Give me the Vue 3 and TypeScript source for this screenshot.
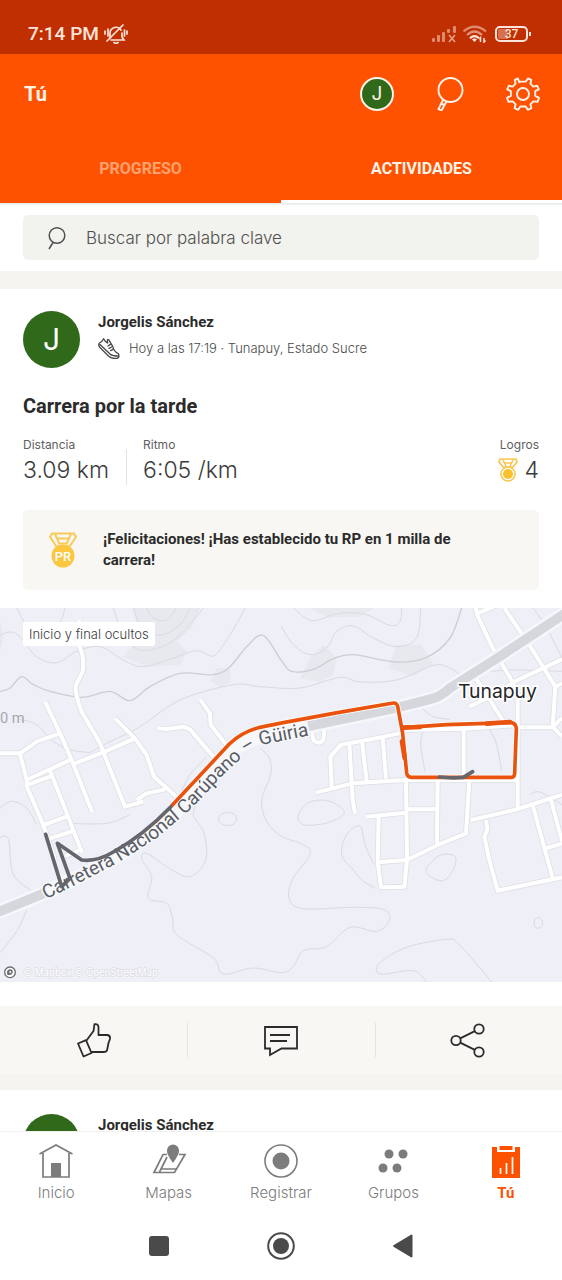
<script setup lang="ts">
type Point = [number, number]

interface NavItem {
  id: string
  label: string
}

const navItems: NavItem[] = [
  { id: 'home', label: 'Inicio' },
  { id: 'maps', label: 'Mapas' },
  { id: 'record', label: 'Registrar' },
  { id: 'groups', label: 'Grupos' },
  { id: 'you', label: 'Tú' },
]

// Turns a list of points into a smooth curve running through all of them.
function smooth(pts: Point[], closed = false): string {
  const n = pts.length
  const at = (i: number): Point =>
    closed ? pts[(i + n) % n] : pts[Math.max(0, Math.min(n - 1, i))]
  let d = `M${pts[0][0]} ${pts[0][1]}`
  const segments = closed ? n : n - 1
  for (let i = 0; i < segments; i++) {
    const [a, b, c, e] = [at(i - 1), at(i), at(i + 1), at(i + 2)]
    d += ` C${b[0] + (c[0] - a[0]) / 6} ${b[1] + (c[1] - a[1]) / 6}`
    d += ` ${c[0] - (e[0] - b[0]) / 6} ${c[1] - (e[1] - b[1]) / 6} ${c[0]} ${c[1]}`
  }
  return closed ? d + 'Z' : d
}

const mainContour = smooth([
  [0, 251], [30, 240], [65, 206], [100, 230], [150, 250], [245, 268], [330, 250], [390, 278],
  [450, 236], [540, 196], [640, 200], [690, 176], [740, 116], [790, 82], [843, 156], [875, 190],
  [940, 184], [1000, 152], [1060, 140], [1190, 162], [1280, 148], [1350, 90], [1385, 0],
])

const contours: string[] = [
  smooth([[0, 82], [30, 72], [60, 86], [110, 146], [170, 164], [230, 130], [300, 116], [370, 156], [430, 176], [520, 150], [590, 128], [640, 144], [680, 96], [720, 30], [735, 0]]),
  smooth([[50, 0], [85, 60], [130, 80], [180, 40], [195, 0]]),
  smooth([[340, 0], [370, 80], [420, 126], [500, 110], [560, 60], [610, 0]]),
  smooth([[400, 0], [425, 60], [480, 82], [540, 50], [570, 0]]),
  smooth([[440, 0], [460, 30], [500, 36], [530, 0]]),
  smooth([[270, 434], [320, 406], [420, 356], [540, 276], [700, 230], [780, 236], [900, 240], [1020, 208], [1080, 222], [1190, 216], [1300, 172], [1350, 180], [1385, 204]]),
  smooth([[843, 54], [880, 110], [930, 140], [980, 120], [1010, 70], [1060, 54], [1120, 90], [1190, 116], [1250, 90], [1262, 0]]),
  smooth([[880, 0], [935, 38], [1000, 20], [1040, 14], [1100, 20], [1170, 52], [1200, 40], [1205, 0]]),
  smooth([[60, 334], [110, 350], [160, 400], [210, 425], [270, 434]]),
  smooth([[595, 576], [580, 620], [610, 670], [620, 740], [600, 785], [560, 806], [500, 776], [440, 736], [425, 752], [455, 806], [445, 870], [500, 886], [518, 930], [530, 980], [640, 1050], [670, 1098], [760, 1080], [843, 1094], [880, 1075], [910, 1028], [980, 1016], [1050, 958], [1130, 970], [1168, 935], [1150, 904], [1060, 898], [910, 902], [867, 870], [880, 810], [930, 740], [910, 710], [843, 684], [800, 640], [785, 576], [812, 500], [808, 450], [780, 420]]),
  smooth([[620, 446], [570, 500], [545, 550]]),
  smooth([[0, 1034], [50, 970], [80, 906]]),
  smooth([[0, 600], [35, 580], [80, 600], [110, 650]]),
  smooth([[0, 688], [25, 694], [40, 800], [95, 848]]),
  smooth([[200, 646], [320, 646], [390, 620]]),
  smooth([[895, 620], [930, 582], [990, 580], [1033, 615], [980, 645], [910, 650]], true),
  smooth([[1125, 840], [1090, 820], [1060, 786], [1025, 740], [1040, 680], [1080, 654], [1095, 710], [1120, 766]]),
  smooth([[1280, 780], [1320, 742], [1365, 745], [1360, 785], [1330, 818], [1290, 805]], true),
  smooth([[1280, 1122], [1240, 1088], [1140, 1098], [1140, 1064], [1220, 1018], [1340, 994], [1380, 1012], [1475, 1122]]),
  smooth([[1270, 366], [1262, 410], [1275, 490]]),
  smooth([[1470, 366], [1490, 410], [1505, 490]]),
  smooth([[1265, 300], [1300, 326], [1350, 334]]),
  smooth([[1600, 0], [1640, 60], [1686, 150]]),
  smooth([[1460, 190], [1560, 186], [1686, 190]]),
  smooth([[1590, 560], [1620, 552], [1686, 590]]),
]

const roads: string[] = [
  'M238 36V116Q254 146 248 191L228 231Q222 250 245 311L300 406L335 496L375 596L430 581',
  'M135 281L180 376L215 456L262 576L277 612',
  'M345 331L405 391L440 441L462 506L540 576',
  'M0 436H60L110 401L180 376',
  'M60 438L80 516V536L98 576L130 651L165 756',
  'M80 516L210 456M225 466L315 431L405 391',
  'M80 531L150 506M150 488L185 576L246 734',
  'M473 361L500 363L550 356L570 364L640 446',
  'M600 274L630 316L632 351L684 416',
  'M410 576L440 556L495 544',
  'M130 651L200 626M150 691L225 667M195 744L237 728',
  'M1426 -4L1433 24L1480 124L1533 214M1433 16L1490 -8',
  'M1513 0L1588 111L1666 236L1658 356L1686 385M1658 356L1686 330M1666 236L1686 226',
  'M1408 296L1483 261L1543 221L1686 154',
  'M1428 211L1508 336M1533 214L1553 256V604',
  'M1553 358H1658',
  'M1208 374L1153 386L1048 406L1023 410L991 446L995 538',
  'M948 554L1058 526L1218 516H1553',
  'M1048 406L1058 576L1065 616',
  'M1086 400L1100 520M1148 390L1158 512',
  'M1391 364V506M1208 366L1391 362L1540 352',
  'M1218 516L1221 756L1213 836L1143 838L1133 761L1136 626',
  'M1313 516L1311 706M1408 516L1398 676L1313 711L1221 756L1133 763',
  'M1098 626L1218 614M1221 604H1313',
  'M1413 636L1543 606L1600 588L1686 560',
  'M1458 636L1462 664L1453 686L1468 756L1493 848L1686 808',
  'M1598 591L1658 811M1653 576L1686 700M1638 721L1686 706',
  'M933 355L940 396Q956 412 970 396L974 356',
]

const highway =
  'M-20 918L120 861L240 805L350 746L470 664L560 580L700 426Q740 390 843 372L1183 301L1290 274Q1320 268 1350 240L1483 156L1720 0'
const highwayVisible =
  'M-20 918L120 861L135 854M925 355L1183 301L1290 274Q1320 268 1350 240L1483 156L1720 0'

const route =
  'M515 593L690 406Q735 366 790 356L850 344L1013 314L1180 285Q1190 284 1193 295L1208 376L1220 495Q1222 508 1235 508H1535Q1543 508 1544 496L1549 362Q1548 346 1533 344L1340 350L1210 359'
</script>

<template>
  <div class="app">
    <header class="top">
      <div class="status">
        <span class="clock">7:14 PM</span>
        <svg class="bell" viewBox="0 0 24 20" width="24" height="20" aria-hidden="true">
          <g fill="none" stroke="currentColor" stroke-width="1.7" stroke-linecap="round">
            <path d="M6 14V9a6 6 0 0 1 11-3M18 9v4l2 3H7M10 18.500q2 1.500 4 0" />
            <path d="M3 17L19 1M4 5v7M1 7v3M20.500 6v6M23 7v3" />
          </g>
        </svg>
        <span class="spacer"></span>
        <svg viewBox="0 0 26 18" width="26" height="18" aria-hidden="true">
          <g fill="currentColor" opacity=".5">
            <rect x="1" y="13" width="3" height="4" rx="1" />
            <rect x="6" y="10" width="3" height="7" rx="1" />
            <rect x="11" y="7" width="3" height="10" rx="1" />
            <rect x="16" y="4" width="3" height="4" rx="1" />
            <rect x="22" y="1" width="3" height="7" rx="1" />
          </g>
          <path d="M18 10l6 7M24 10l-6 7" stroke="currentColor" stroke-width="1.700" opacity=".6" />
        </svg>
        <svg class="wifi" viewBox="0 0 26 18" width="26" height="18" aria-hidden="true">
          <g fill="none" stroke="currentColor" stroke-width="2.200">
            <path d="M1.500 6.500Q12.500 -3 24 6.500" opacity=".5" />
            <path d="M5 10Q12.500 3 20 10" opacity=".55" />
            <path d="M8 13.200Q12.500 9 17 13.200" />
          </g>
          <path d="M10 14.500Q12.500 12.500 15 14.500L12.500 17z" fill="currentColor" />
          <path d="M18.500 17v-4l-1 1.500M22 13v4l1.500-1.500" fill="none" stroke="currentColor" stroke-width="1.500" />
        </svg>
        <span class="battery"><span class="charge">37</span></span>
      </div>

      <div class="bar">
        <h1>Tú</h1>
        <button class="icon-btn mini-avatar" type="button" aria-label="Perfil">J</button>
        <button class="icon-btn" type="button" aria-label="Buscar">
          <svg viewBox="0 0 34 34" width="34" height="34" fill="none" stroke="currentColor" stroke-width="1.900">
            <circle cx="17.500" cy="13" r="12" />
            <path d="M10.500 22L5.500 32L8.500 33.500L13.500 24.500M9 27L12 28" />
          </svg>
        </button>
        <button class="icon-btn" type="button" aria-label="Ajustes">
          <svg viewBox="0 0 34 34" width="34" height="34" fill="none" stroke="currentColor" stroke-width="1.900" stroke-linejoin="round">
            <circle cx="17" cy="17" r="6" />
            <path d="M13.100 5.200L12 1.500L8.800 2.800L9.600 6.700L6.700 9.600L2.800 8.800L1.200 12.300L4.900 14.200V18.800L1 20.800L2.500 24.800L6.700 24.400L9.600 27.300L8.600 31.200L12.200 32.800L14.300 29.500H19.700L21.800 32.800L25.400 31.200L24.400 27.300L27.300 24.400L31.500 24.800L33 20.800L29.200 18.800V14.200L32.800 12.300L31.200 8.800L27.300 9.600L24.400 6.700L25.200 2.800L22 1.500L19.700 4.600H14.300z" />
          </svg>
        </button>
      </div>

      <nav class="tabs" aria-label="Secciones">
        <button type="button">PROGRESO</button>
        <button type="button" class="active" aria-current="page">ACTIVIDADES</button>
      </nav>
    </header>

    <main class="feed">
      <div class="search-area">
        <label class="search">
          <svg viewBox="0 0 20 24" width="20" height="24" fill="none" stroke="currentColor" stroke-width="1.500" aria-hidden="true">
            <circle cx="11" cy="9.500" r="7.800" />
            <path d="M7 16.500L3 23" />
          </svg>
          <input type="search" placeholder="Buscar por palabra clave" aria-label="Buscar por palabra clave" />
        </label>
      </div>

      <article class="card">
        <div class="athlete">
          <div class="avatar">J</div>
          <div class="who">
            <strong>Jorgelis Sánchez</strong>
            <p>
              <svg viewBox="0 0 66 66" width="22" height="22" fill="none" stroke="currentColor" stroke-width="4" stroke-linejoin="round" stroke-linecap="round" aria-hidden="true">
                <path d="M17 5Q13 14 4 18Q0 24 5 31L32 58Q42 66 58 64Q66 60 61 50Q48 44 44 28L32 8Q26 6 29 18Q22 16 17 5z" />
                <path d="M5 22L37 52Q44 57 60 57M37 22L30 27M41 30L33 34M45 37L38 41" />
              </svg>
              <span>Hoy a las 17:19 · Tunapuy, Estado Sucre</span>
            </p>
          </div>
        </div>
        <h2>Carrera por la tarde</h2>
        <dl class="stats">
          <div>
            <dt>Distancia</dt>
            <dd>3.09 km</dd>
          </div>
          <div>
            <dt>Ritmo</dt>
            <dd>6:05 /km</dd>
          </div>
          <div class="awards">
            <dt>Logros</dt>
            <dd>
              <svg viewBox="0 0 20 24" width="20" height="24" fill="none" stroke="#f6c64f" stroke-width="1.600" aria-hidden="true">
                <path d="M2 1H18L19 4L15 9H5L1 4zM5 2L8 8M15 2L12 8M6.500 5H13.500" />
                <circle cx="10" cy="16" r="7" />
                <circle cx="10" cy="16" r="5" fill="#fbc02d" stroke="none" />
              </svg>
              4
            </dd>
          </div>
        </dl>
        <div class="notice">
          <svg viewBox="0 0 28 36" width="28" height="36" aria-hidden="true">
            <path d="M3 1.500H25L27 5L20.500 14.500H7.500L1 5zM6 2L10.500 12M22 2L17.500 12M8 6.500H20M10 11.500H18" fill="none" stroke="#f8ca56" stroke-width="2" />
            <circle cx="14" cy="24" r="11.500" fill="#fbc640" />
            <text x="14" y="29" class="pr">PR</text>
          </svg>
          <p>¡Felicitaciones! ¡Has establecido tu RP en 1 milla de carrera!</p>
        </div>

        <div class="map">
          <svg viewBox="0 0 1686 1122" role="img" aria-label="Mapa del recorrido">
            <rect width="1686" height="1122" fill="#eeeff7" />
            <g fill="#e8e9ef">
              <path d="M400 0H600L575 60L530 100L560 130L540 170L440 176L370 146L420 90z" />
              <path d="M650 180L690 182L692 222L660 240L632 218z" />
              <path d="M930 150L970 110L1010 150L1000 200L960 222L900 210z" />
              <path d="M1190 110H1265L1300 170L1240 205L1165 180z" />
              <path d="M930 0H1120L1080 26L980 28z" />
              <path d="M0 40V130L10 90z" />
            </g>
            <g fill="none" stroke="#dadbdf" stroke-width="3">
              <path v-for="(d, i) in contours" :key="i" :d="d" />
              <ellipse cx="683" cy="633" rx="27" ry="20" />
              <ellipse cx="1615" cy="945" rx="13" ry="16" />
              <path :d="mainContour" stroke="#cdced4" stroke-width="4" />
            </g>
            <g fill="none" stroke="#dfe0e6" stroke-width="17" stroke-linejoin="round">
              <path v-for="(d, i) in roads" :key="i" :d="d" />
            </g>
            <g fill="none" stroke="#ffffff" stroke-width="12" stroke-linejoin="round">
              <path v-for="(d, i) in roads" :key="i" :d="d" />
            </g>
            <path :d="highway" fill="none" stroke="#f6f7fb" stroke-width="44" />
            <path :d="highwayVisible" fill="none" stroke="#d6d7dd" stroke-width="29" />

            <path
              id="road-name"
              d="M138 874L240 824L350 766L470 690L560 614L600 576L660 510L735 440Q765 416 805 406L960 376"
              fill="none"
            />
            <text class="road-label"><textPath href="#road-name">Carretera Nacional Carúpano – Güiria</textPath></text>
            <text x="0" y="346" class="height-label">0 m</text>
            <text x="1374" y="270" class="town-label">Tunapuy</text>

            <g fill="none" stroke-linejoin="round" stroke-linecap="round">
              <path :d="route" stroke="#ffffff" stroke-width="16" />
              <g stroke="#e9530e" stroke-width="11">
                <path :d="route" />
                <path d="M1210 359L1260 357M1460 347L1530 342M1206 400L1214 450" stroke-width="14" />
              </g>
              <g stroke="#64666b" stroke-width="11">
                <path d="M137 679L185 836L210 811L172 706L245 756Q290 762 340 732Q430 682 512 597" />
                <path d="M1318 507L1360 510L1390 508L1418 491" />
              </g>
            </g>

            <circle cx="30" cy="1093" r="16" fill="#ffffff" stroke="#6b6c70" stroke-width="4" />
            <path d="M22 1100Q18 1088 28 1084Q40 1084 38 1094Q34 1104 22 1100z" fill="#6b6c70" />
            <circle cx="31" cy="1092" r="3" fill="#ffffff" />
            <text x="70" y="1104" class="credit">© Mapbox © OpenStreetMap</text>
          </svg>
          <span class="map-tag">Inicio y final ocultos</span>
        </div>

        <div class="actions">
          <button type="button" aria-label="Me gusta">
            <svg viewBox="0 0 36 36" width="36" height="36" fill="none" stroke="currentColor" stroke-width="1.800" stroke-linejoin="round">
              <path d="M10.500 18.500L17.500 9L18.500 2.200Q22 1.500 22.500 5V13H31.500Q34.500 13.500 34 17L32.500 21L31 28.500Q30 30 28 30H15M2 21.500L10 18.200L15.500 31L7.500 34.500z" />
            </svg>
          </button>
          <button type="button" aria-label="Comentar">
            <svg viewBox="0 0 36 36" width="36" height="36" fill="none" stroke="currentColor" stroke-width="1.800">
              <path d="M2 5H34V26.500H18.500L7 33V26.500H2zM7 13H27M7 19H24" />
            </svg>
          </button>
          <button type="button" aria-label="Compartir">
            <svg viewBox="0 0 36 36" width="36" height="36" fill="none" stroke="currentColor" stroke-width="1.800">
              <circle cx="6" cy="18.500" r="4.700" />
              <circle cx="29" cy="7" r="4.700" />
              <circle cx="29" cy="30" r="4.700" />
              <path d="M10.200 16.400L24.800 9.100M10.200 20.600L24.800 27.900" />
            </svg>
          </button>
        </div>
      </article>

      <article class="card next">
        <div class="athlete">
          <div class="avatar">J</div>
          <div class="who"><strong>Jorgelis Sánchez</strong></div>
        </div>
      </article>
    </main>

    <nav class="bottom" aria-label="Principal">
      <a v-for="item in navItems" :key="item.id" :href="'#' + item.id" :class="{ current: item.id === 'you' }">
        <svg viewBox="0 0 36 36" width="36" height="36" aria-hidden="true">
          <g v-if="item.id === 'home'" fill="none" stroke="currentColor" stroke-width="1.700">
            <path d="M1.500 11L18 2L34.500 11M5 10V34H31V10" />
            <rect x="13" y="20" width="10" height="14" fill="currentColor" stroke="none" />
          </g>
          <g v-else-if="item.id === 'maps'">
            <path d="M16 11.500H12L3 29.500H23.500L34 11.500H28M16 14L8.500 29M10 26H25" fill="none" stroke="currentColor" stroke-width="1.700" />
            <path d="M22 20Q15.500 11 16 7.500A6 6 0 0 1 28 7.500Q28.500 11 22 20z" fill="currentColor" />
          </g>
          <g v-else-if="item.id === 'record'">
            <circle cx="18" cy="18" r="16" fill="none" stroke="currentColor" stroke-width="1.600" />
            <circle cx="18" cy="18" r="8.500" fill="currentColor" />
          </g>
          <g v-else-if="item.id === 'groups'" fill="currentColor">
            <circle cx="14" cy="11" r="4.500" />
            <circle cx="28" cy="11" r="4.500" />
            <circle cx="8" cy="25" r="4.500" />
            <circle cx="22" cy="25" r="4.500" />
          </g>
          <g v-else>
            <path d="M4 4H9V9H27V4H32V35H4z" fill="currentColor" />
            <path d="M11.500 3H24.500V7H11.500z" fill="currentColor" />
            <path d="M12.500 31V25M18.500 31V20M24.500 31V14" stroke="#ffffff" stroke-width="1.700" />
          </g>
        </svg>
        <span>{{ item.label }}</span>
      </a>
    </nav>

    <div class="system">
      <button type="button" aria-label="Recientes">
        <svg viewBox="0 0 30 30" width="30" height="30"><rect x="5" y="5" width="20" height="20" rx="3" fill="currentColor" /></svg>
      </button>
      <button type="button" aria-label="Inicio del sistema">
        <svg viewBox="0 0 30 30" width="30" height="30">
          <circle cx="15" cy="15" r="12.800" fill="none" stroke="currentColor" stroke-width="2" />
          <circle cx="15" cy="15" r="8" fill="currentColor" />
        </svg>
      </button>
      <button type="button" aria-label="Atrás">
        <svg viewBox="0 0 30 30" width="30" height="30">
          <path d="M6 15L23.500 4.500V25.500z" fill="currentColor" stroke="currentColor" stroke-width="2" stroke-linejoin="round" />
        </svg>
      </button>
    </div>
  </div>
</template>

<style>
body {
  margin: 0;
  background: #ffffff;
}
</style>

<style scoped>
.app {
  display: flex;
  flex-direction: column;
  height: 100vh;
  overflow: hidden;
  background: #ffffff;
  color: #2b2b2b;
  font-family: Inter, "Liberation Sans", sans-serif;
}

button {
  padding: 0;
  border: 0;
  background: none;
  color: inherit;
  font: inherit;
}

svg {
  display: block;
  flex: none;
}

.top {
  flex: none;
  background: #fe5200;
  color: #fff3ea;
}

.status {
  display: flex;
  align-items: center;
  height: 54px;
  box-sizing: border-box;
  padding: 14px 34px 0 28px;
  background: #bf2f00;
  color: #ffe4dc;
}

.clock {
  font: 500 19px/24px Roboto, sans-serif;
}

.bell {
  margin-left: 5px;
}

.spacer {
  flex: 1;
}

.wifi {
  margin: 0 7px 0 5px;
}

.battery {
  position: relative;
  box-sizing: border-box;
  width: 33px;
  height: 16px;
  padding: 1px;
  border: 2px solid #ffe4dc;
  border-radius: 5px;
}

.battery::after {
  content: "";
  position: absolute;
  top: 4px;
  right: -5px;
  width: 2px;
  height: 4px;
  background: #ffe4dc;
}

.charge {
  display: block;
  height: 10px;
  border-radius: 2px;
  background: linear-gradient(90deg, #d9704f 37%, transparent 37%);
  font: 500 12px/10px Roboto, sans-serif;
  text-align: center;
}

.bar {
  display: flex;
  align-items: center;
  gap: 39px;
  height: 80px;
  padding: 0 22px 0 24px;
}

.bar h1 {
  flex: 1;
  margin: 0;
  font: 700 20px/24px Roboto, sans-serif;
}

.icon-btn {
  width: 34px;
  height: 34px;
}

.mini-avatar {
  box-sizing: border-box;
  border: 2px solid #fff3ea;
  border-radius: 50%;
  background: #31691b;
  font-size: 19px;
  line-height: 30px;
}

.tabs {
  display: flex;
  height: 69px;
}

.tabs button {
  flex: 1;
  padding-top: 3px;
  border-bottom: 3px solid transparent;
  color: #ffa26f;
  font: 700 16px/20px Roboto, sans-serif;
}

.tabs .active {
  border-color: #ffffff;
  color: #fff3ea;
}

.feed {
  flex: 1;
  min-height: 0;
  overflow: hidden;
}

.search-area {
  padding: 12px 23px 11px;
  box-shadow: inset 0 4px 3px -3px #d9e0e0;
}

.search {
  display: flex;
  align-items: center;
  gap: 20px;
  height: 45px;
  padding: 0 20px 0 23px;
  border-radius: 5px;
  background: #f2f2ee;
  color: #50504e;
}

.search input {
  flex: 1;
  min-width: 0;
  padding: 0;
  border: 0;
  outline: 0;
  background: none;
  color: inherit;
  font: 300 17px/24px Inter, sans-serif;
}

.search input::placeholder {
  color: #50504e;
  opacity: 1;
}

.card {
  padding: 22px 0 0;
  border-top: 18px solid #f5f4f1;
}

.next {
  border-top-width: 16px;
  padding-top: 24px;
}

.athlete {
  display: flex;
  gap: 18px;
  padding: 0 23px;
}

.avatar {
  flex: none;
  width: 57px;
  height: 57px;
  border-radius: 50%;
  background: #31691b;
  color: #ffffff;
  font-size: 30px;
  line-height: 57px;
  text-align: center;
}

.who strong {
  display: block;
  font: 700 15px/22px Roboto, sans-serif;
}

.who p {
  display: flex;
  align-items: center;
  gap: 9px;
  margin: 3px 0 0;
  color: #4a4a4a;
  font-size: 13px;
  font-weight: 300;
  line-height: 24px;
}

h2 {
  margin: 24px 23px 0;
  font: 700 20px/28px Roboto, sans-serif;
}

.stats {
  display: flex;
  margin: 15px 23px 0;
}

.stats div + div {
  margin-left: 17px;
  padding-left: 17px;
  background: linear-gradient(#e3e3e1, #e3e3e1) left bottom / 1px 36px no-repeat;
}

.stats .awards {
  flex: 1;
  background: none;
  text-align: right;
}

dt {
  color: #606060;
  font-size: 12px;
  line-height: 20px;
}

dd {
  margin: 0;
  color: #3c3c3c;
  font-size: 23px;
  font-weight: 300;
  line-height: 30px;
}

.awards dd {
  display: flex;
  align-items: center;
  justify-content: flex-end;
  gap: 7px;
}

.notice {
  display: flex;
  align-items: center;
  gap: 26px;
  margin: 25px 23px 18px;
  padding: 19px 60px 19px 26px;
  border-radius: 5px;
  background: #f8f7f3;
}

.notice p {
  margin: 0;
  font: 700 15px/21px Roboto, sans-serif;
}

.pr {
  fill: #ffffff;
  font: 500 13px Roboto, sans-serif;
  text-anchor: middle;
}

.map {
  position: relative;
}

.map > svg {
  width: 100%;
  height: auto;
}

.map-tag {
  position: absolute;
  top: 14px;
  left: 23px;
  padding: 0 6px;
  border-radius: 2px;
  background: #ffffff;
  color: #3c3c3c;
  font-size: 13px;
  font-weight: 300;
  line-height: 24px;
}

.road-label {
  fill: #595c63;
  stroke: #f6f7fb;
  stroke-width: 8px;
  paint-order: stroke;
  font: 400 57px Roboto, sans-serif;
}

.height-label {
  fill: #a5a7ae;
  font: 400 44px Roboto, sans-serif;
}

.town-label {
  fill: #25262a;
  stroke: #ffffff;
  stroke-width: 10px;
  paint-order: stroke;
  font: 400 58px Inter, sans-serif;
}

.credit {
  fill: #ffffff;
  stroke: #dcdde3;
  stroke-width: 4px;
  paint-order: stroke;
  font: 400 29px Inter, sans-serif;
}

.actions {
  display: flex;
  height: 68px;
  margin-top: 24px;
  background: #f8f7f3;
}

.actions button {
  display: flex;
  flex: 1;
  align-items: center;
  justify-content: center;
}

.actions button + button {
  background: linear-gradient(#e3e3e1, #e3e3e1) left center / 1px 34px no-repeat;
}

.bottom {
  display: flex;
  flex: none;
  height: 80px;
  border-top: 1px solid #f0f0ef;
  background: #ffffff;
}

.bottom a {
  display: flex;
  flex: 1;
  flex-direction: column;
  align-items: center;
  gap: 4px;
  padding-top: 11px;
  color: #7c7c7c;
  font-size: 15px;
  font-weight: 300;
  line-height: 20px;
  text-decoration: none;
}

.bottom .current {
  color: #fc5200;
  font-family: Roboto, sans-serif;
  font-weight: 700;
}

.system {
  display: flex;
  flex: none;
  align-items: center;
  justify-content: center;
  gap: 92px;
  height: 68px;
  background: #ffffff;
  color: #4a4a4a;
}
</style>
